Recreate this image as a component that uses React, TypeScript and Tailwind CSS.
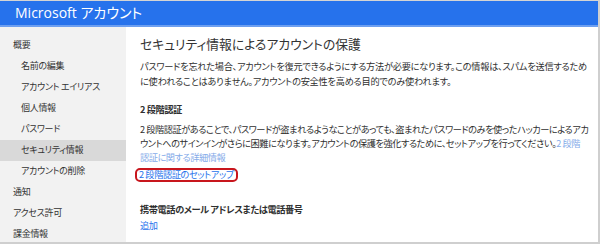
import React from "react";

const jp = "font-['Noto_Sans_CJK_JP',sans-serif] [font-feature-settings:'palt']";

const nav: { label: string; sub?: boolean; active?: boolean }[] = [
  { label: "概要" },
  { label: "名前の編集", sub: true },
  { label: "アカウント エイリアス", sub: true },
  { label: "個人情報", sub: true },
  { label: "パスワード", sub: true },
  { label: "セキュリティ情報", sub: true, active: true },
  { label: "アカウントの削除", sub: true },
  { label: "通知" },
  { label: "アクセス許可" },
  { label: "課金情報" },
];

export default function App() {
  return (
    <div className={`w-[600px] h-[244px] overflow-hidden bg-white border-t border-t-[#d4d4d4] border-r-2 border-r-[#cfcfcf] border-b-2 border-b-[#cfcfcf] flex flex-col ${jp}`}>
      <div className="h-[26px] shrink-0 bg-[#2672ec] border-b-2 border-b-[#6d9ff0] flex items-center pl-[15px]">
        <span className="text-white text-[14px] leading-none font-['Open_Sans','Noto_Sans_CJK_JP',sans-serif] [font-feature-settings:'palt']">
          Microsoft アカウント
        </span>
      </div>
      <div className="flex flex-1 min-h-0">
        <div className="w-[126px] shrink-0 bg-[#f2f2f2] pt-[7.5px]">
          {nav.map((n) => (
            <div
              key={n.label}
              className={`h-[21px] flex items-center text-[9px] tracking-[-0.3px] text-[#333] whitespace-nowrap ${n.sub ? "pl-[21px]" : "pl-[13px]"} ${n.active ? "bg-[#d9d9d9]" : ""}`}
            >
              {n.label}
            </div>
          ))}
        </div>
        <div className="flex-1 pl-[14px] pt-[8px] text-[#2f2f2f] tracking-[-0.4px]">
          <div className="text-[12.8px] leading-[18px] tracking-normal text-[#333] whitespace-nowrap">
            セキュリティ情報によるアカウントの保護
          </div>
          <div className="mt-[5.5px] text-[9.2px] leading-[15px] tracking-[-0.25px] whitespace-nowrap">
            <div>パスワードを忘れた場合、アカウントを復元できるようにする方法が必要になります。この情報は、スパムを送信するため</div>
            <div>に使われることはありません。アカウントの安全性を高める目的でのみ使われます。</div>
          </div>
          <div className="mt-[13px] text-[9.2px] leading-[15px] font-bold">2 段階認証</div>
          <div className="mt-[5px] text-[9.2px] leading-[14px] tracking-[-0.45px] whitespace-nowrap">
            <div>2 段階認証があることで、パスワードが盗まれるようなことがあっても、盗まれたパスワードのみを使ったハッカーによるアカ</div>
            <div>
              ウントへのサインインがさらに困難になります。アカウントの保護を強化するために、セットアップを行ってください。
              <span className="text-[#85abe9]">2 段階</span>
            </div>
            <div className="text-[#85abe9]">認証に関する詳細情報</div>
          </div>
          <div className="mt-[4px] -ml-[5px] flex w-fit items-center h-[14.5px] px-[2px] border-2 border-[#c8161d] rounded-[5px] text-[9.2px] leading-none text-[#2672ec] whitespace-nowrap">
            2 段階認証のセットアップ
          </div>
          <div className="mt-[19.5px] text-[9.2px] leading-[15px] font-bold whitespace-nowrap">
            携帯電話のメール アドレスまたは電話番号
          </div>
          <div className="mt-[1px] text-[9.2px] leading-[15px] text-[#2672ec]">追加</div>
        </div>
      </div>
    </div>
  );
}
